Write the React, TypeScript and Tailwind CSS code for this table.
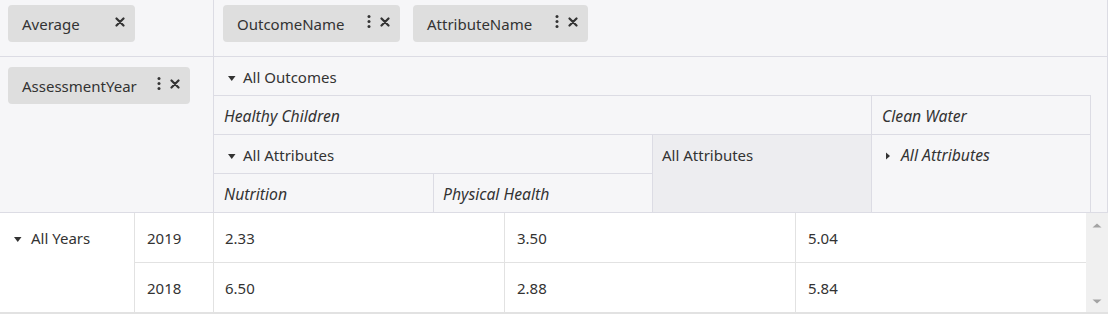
import React from 'react';

function Cross() {
    return (
        <svg width="10" height="10" viewBox="0 0 10 10" aria-hidden>
            <path
                d="M1.5 1.5l7 7M8.5 1.5l-7 7"
                stroke="#333"
                strokeWidth="2.2"
                strokeLinecap="round"
            />
        </svg>
    );
}

function Dots() {
    return (
        <svg width="4" height="13" viewBox="0 0 4 13" fill="#333" aria-hidden>
            <circle cx="2" cy="1.6" r="1.5" />
            <circle cx="2" cy="6.5" r="1.5" />
            <circle cx="2" cy="11.4" r="1.5" />
        </svg>
    );
}

function CaretDown() {
    return (
        <svg width="12" height="8" viewBox="0 0 12 8" fill="#333" aria-hidden className="translate-y-[1px]">
            <path d="M4 2h7.5l-3.75 5z" />
        </svg>
    );
}

function CaretRight() {
    return (
        <svg width="12" height="8" viewBox="0 0 12 8" fill="#333" aria-hidden className="translate-y-[1px]">
            <path d="M4 0.5v7l4-3.5z" />
        </svg>
    );
}

function Chip({ label, className, menu }: { label: string; className: string; menu?: boolean }) {
    return (
        <div
            className={`flex h-[37px] items-center justify-between rounded-[4px] bg-[#dedede] pl-[14px] pr-[10px] ${className}`}
        >
            <span className="pt-[1px]">{label}</span>
            <span className="-mt-[4px] flex items-center gap-[9px]">
                {menu && <Dots />}
                <Cross />
            </span>
        </div>
    );
}

export default function App() {
    return (
        <div className="w-[1108px] bg-white font-['Noto_Sans'] text-[15px] leading-5 text-[#333]">
            {/* filter row */}
            <div className="flex h-[57px] border-r border-b border-[#dcdce4] bg-[#f6f6f8]">
                <div className="w-[214px] border-r border-[#dcdce4] pt-[5px] pl-[8px]">
                    <Chip label="Average" className="w-[127px]" />
                </div>
                <div className="flex gap-[13px] pt-[5px] pl-[9px]">
                    <Chip label="OutcomeName" className="w-[177px]" menu />
                    <Chip label="AttributeName" className="w-[175px]" menu />
                </div>
            </div>

            {/* column header */}
            <div className="flex h-[156px] border-r border-b border-[#dcdce4] bg-[#f6f6f8]">
                <div className="w-[214px] border-r border-[#dcdce4] pt-[10px] pl-[8px]">
                    <Chip label="AssessmentYear" className="w-[182px]" menu />
                </div>
                <div className="grid grid-cols-[220px_219px_219px_219px_16px] grid-rows-[39px_39px_39px_38px]">
                    <div className="col-span-4 col-start-1 row-start-1 flex items-start border-b border-[#dcdce4] pt-[10px] pl-[10px]">
                        <span className="flex h-5 items-center">
                            <CaretDown />
                        </span>
                        <span className="ml-[7px]">All Outcomes</span>
                    </div>
                    <div className="col-span-3 col-start-1 row-start-2 border-r border-b border-[#dcdce4] pt-[10px] pl-[10px] text-[15.75px] italic">
                        Healthy Children
                    </div>
                    <div className="col-start-4 row-start-2 border-r border-b border-[#dcdce4] pt-[10px] pl-[10px] text-[15.75px] italic">
                        Clean Water
                    </div>
                    <div className="col-span-2 col-start-1 row-start-3 flex items-start border-r border-b border-[#dcdce4] pt-[10px] pl-[10px]">
                        <span className="flex h-5 items-center">
                            <CaretDown />
                        </span>
                        <span className="ml-[7px]">All Attributes</span>
                    </div>
                    <div className="col-start-3 row-span-2 row-start-3 border-r border-[#dcdce4] bg-[#ededf0] pt-[10px] pl-[9px]">
                        All Attributes
                    </div>
                    <div className="col-start-4 row-span-2 row-start-3 flex items-start border-r border-[#dcdce4] pt-[10px] pl-[10px] text-[15.75px] italic">
                        <span className="flex h-5 items-center">
                            <CaretRight />
                        </span>
                        <span className="ml-[7px]">All Attributes</span>
                    </div>
                    <div className="col-start-1 row-start-4 border-r border-[#dcdce4] pt-[10px] pl-[10px] text-[15.75px] italic">
                        Nutrition
                    </div>
                    <div className="col-start-2 row-start-4 border-r border-[#dcdce4] pt-[10px] pl-[9px] text-[15.75px] italic">
                        Physical Health
                    </div>
                    <div className="col-start-5 row-span-4 row-start-1" />
                </div>
            </div>

            {/* data */}
            <div className="grid grid-cols-[135px_79px_291px_291px_290px_22px] grid-rows-[50px_49px] border-b-2 border-[#e2e2e2]">
                <div className="col-start-1 row-span-2 row-start-1 flex items-start border-r border-[#e2e2e2] pt-[15px] pl-[10px]">
                    <span className="flex h-5 items-center">
                        <CaretDown />
                    </span>
                    <span className="ml-[9px]">All Years</span>
                </div>
                <div className="col-start-2 row-start-1 border-r border-b border-[#e2e2e2] pt-[15px] pl-[12px]">2019</div>
                <div className="col-start-3 row-start-1 border-r border-b border-[#e2e2e2] pt-[15px] pl-[11px]">2.33</div>
                <div className="col-start-4 row-start-1 border-r border-b border-[#e2e2e2] pt-[15px] pl-[12px]">3.50</div>
                <div className="col-start-5 row-start-1 border-b border-[#e2e2e2] pt-[15px] pl-[12px]">5.04</div>
                <div className="col-start-2 row-start-2 border-r border-[#e2e2e2] pt-[15px] pl-[12px]">2018</div>
                <div className="col-start-3 row-start-2 border-r border-[#e2e2e2] pt-[15px] pl-[11px]">6.50</div>
                <div className="col-start-4 row-start-2 border-r border-[#e2e2e2] pt-[15px] pl-[12px]">2.88</div>
                <div className="col-start-5 row-start-2 pt-[15px] pl-[12px]">5.84</div>
                <div className="col-start-6 row-span-2 row-start-1 flex flex-col items-center justify-between bg-[#f0f0f0] pt-[10px] pb-[8px]">
                    <svg width="10" height="5" viewBox="0 0 10 5" fill="#a3a3a3" aria-hidden>
                        <path d="M0.5 4.5L5 0.5l4.5 4z" />
                    </svg>
                    <svg width="10" height="5" viewBox="0 0 10 5" fill="#a3a3a3" aria-hidden>
                        <path d="M0.5 0.5h9L5 4.5z" />
                    </svg>
                </div>
            </div>
        </div>
    );
}
